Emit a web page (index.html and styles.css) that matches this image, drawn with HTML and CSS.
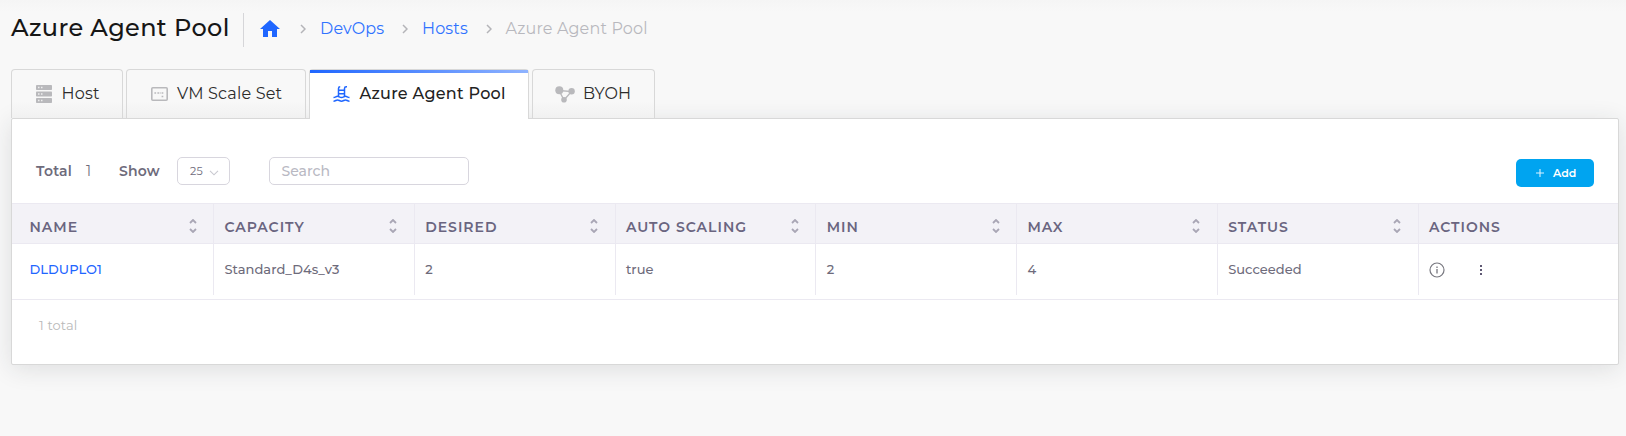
FILE: index.html
```html
<!DOCTYPE html>
<html lang="en">
<head>
<meta charset="utf-8">
<title>Azure Agent Pool</title>
<link rel="stylesheet" href="styles.css">
</head>
<body>
<svg width="0" height="0" class="defs">
  <symbol id="chev" viewBox="0 0 6 10"><path d="M1 1l4 4-4 4" fill="none" stroke="currentColor" stroke-width="1.5"/></symbol>
  <symbol id="sort" viewBox="0 0 8 14"><path d="M1 4l3-3 3 3M1 10l3 3 3-3" fill="none" stroke="currentColor" stroke-width="1.8"/></symbol>
</svg>
<header class="top">
  <h1 class="title">Azure Agent Pool</h1>
  <nav class="crumbs">
    <svg class="home" viewBox="0 0 20 17"><path d="M10 0L0 9h3v8h5v-6h4v6h5V9h3z" fill="#1f66ff"/></svg>
    <svg class="chev"><use href="#chev"/></svg>
    <a class="c-devops">DevOps</a>
    <svg class="chev"><use href="#chev"/></svg>
    <a class="c-hosts">Hosts</a>
    <svg class="chev"><use href="#chev"/></svg>
    <span class="c-current">Azure Agent Pool</span>
  </nav>
</header>
<div class="tabs">
  <div class="tab t-host">
    <svg width="16" height="18" viewBox="0 0 16 18"><g fill="#b9b9bc"><rect width="16" height="5" rx=".8"/><rect y="6.5" width="16" height="5" rx=".8"/><rect y="13" width="16" height="5" rx=".8"/></g><path d="M2 2.5h1.5M5 2.5h1.5M2 9h1.5M5 9h1.5M2 15.5h1.5M5 15.5h1.5" stroke="#eee" stroke-width="1.4"/></svg>
    <span>Host</span>
  </div>
  <div class="tab t-vm">
    <svg width="17" height="14" viewBox="0 0 17 14"><rect x=".8" y=".8" width="15.4" height="12.4" rx="1" fill="none" stroke="#b9b9bc" stroke-width="1.6"/><path d="M3.4 6h1.700M6.400 6h1.700M8.800 6h.800M10.600 6h1.700M10.600 9.500h1.700" stroke="#b9b9bc" stroke-width="1.600"/></svg>
    <span>VM Scale Set</span>
  </div>
  <div class="tab t-pool active">
    <svg width="17" height="16" viewBox="0 0 17 16" fill="none" stroke="#1f66ff" stroke-width="1.5"><path d="M5.500 10V2.400Q5.500.800 7.200.800M11.500 10V2.400Q11.500.800 13.200.800H14M5.500 4.200h6M5.500 7.800h6"/><path d="M.5 11.500C2.500 11.500 3 10.200 4.500 10.200S6.700 11.500 8.500 11.500S11 10.200 12.500 10.200S14.500 11.500 16.500 11.500M.5 15.200C2.500 15.200 3 13.900 4.500 13.900S6.700 15.200 8.500 15.200S11 13.900 12.500 13.900S14.500 15.200 16.500 15.200"/></svg>
    <span>Azure Agent Pool</span>
  </div>
  <div class="tab t-byoh">
    <svg width="20" height="17" viewBox="0 0 20 17"><path d="M4 4.500L16.500 5.500L9 14z" fill="none" stroke="#b9b9bc" stroke-width="1.3"/><g fill="#b9b9bc"><circle cx="4.300" cy="4.300" r="4"/><circle cx="16.600" cy="5.300" r="3.200"/><circle cx="9" cy="13.700" r="2.800"/></g></svg>
    <span>BYOH</span>
  </div>
</div>
<main class="panel">
  <div class="tools">
    <b class="l-total">Total</b><span class="count">1</span><b class="l-show">Show</b>
    <div class="select"><span>25</span><svg width="10" height="6" viewBox="0 0 10 6"><path d="M1 .8l4 4 4-4" fill="none" stroke="#c9c9d0" stroke-width="1.100"/></svg></div>
    <div class="search">Search</div>
    <div class="add"><svg width="8" height="8" viewBox="0 0 8 8"><path d="M4 0v8M0 4h8" stroke="#d9f1ff" stroke-width="1.100"/></svg><span>Add</span></div>
  </div>
  <div class="row head">
    <div class="cell"><span>NAME</span><svg class="sort"><use href="#sort"/></svg></div>
    <div class="cell"><span>CAPACITY</span><svg class="sort"><use href="#sort"/></svg></div>
    <div class="cell"><span>DESIRED</span><svg class="sort"><use href="#sort"/></svg></div>
    <div class="cell"><span>AUTO SCALING</span><svg class="sort"><use href="#sort"/></svg></div>
    <div class="cell"><span>MIN</span><svg class="sort"><use href="#sort"/></svg></div>
    <div class="cell"><span>MAX</span><svg class="sort"><use href="#sort"/></svg></div>
    <div class="cell"><span>STATUS</span><svg class="sort"><use href="#sort"/></svg></div>
    <div class="cell"><span>ACTIONS</span></div>
  </div>
  <div class="row body">
    <div class="cell"><a>DLDUPLO1</a></div>
    <div class="cell"><span>Standard_D4s_v3</span></div>
    <div class="cell"><span>2</span></div>
    <div class="cell"><span>true</span></div>
    <div class="cell"><span>2</span></div>
    <div class="cell"><span>4</span></div>
    <div class="cell"><span>Succeeded</span></div>
    <div class="cell acts">
      <svg width="16" height="16" viewBox="0 0 16 16"><circle cx="8" cy="8" r="7" fill="none" stroke="#77777f" stroke-width="1.200"/><path d="M8 7v4.500M8 4.500v1.400" stroke="#77777f" stroke-width="1.300"/></svg>
      <svg width="4" height="12" viewBox="0 0 4 12"><path d="M1 1h2v2H1zM1 5h2v2H1zM1 9h2v2H1z" fill="#5e5873"/></svg>
    </div>
  </div>
  <div class="foot">1 total</div>
</main>
</body>
</html>
```
FILE: styles.css
```css
* { box-sizing: border-box; }
body { margin: 0; height: 436px; overflow: hidden; background: linear-gradient(#f5f5f5, #f8f8f8 12px); font-family: Montserrat, Inter, sans-serif; color: #6e6b7b; font-size: 13px; letter-spacing: .140px; white-space: nowrap; }
svg { flex: none; display: block; }
.defs { position: absolute; }
.top { display: flex; align-items: center; height: 69px; padding: 0 0 9px 11px; }
.title { margin: 0; width: 233px; height: 34px; line-height: 30px; border-right: 1px solid #d6d6d9; font-size: 24px; font-weight: 500; letter-spacing: .380px; color: #161616; }
.crumbs { display: flex; align-items: center; padding: 0 0 4px 16px; font-size: 16px; letter-spacing: .160px; color: #b8b8be; }
.crumbs a { color: #3073ff; }
.home { width: 20px; height: 17px; margin: 0 20px 0 0; }
.chev { width: 6px; height: 10px; margin: 2px 14px 0 0; color: #b4b4b8; }
.c-devops { width: 82px; }
.c-hosts { width: 63.500px; }
.tabs { display: flex; gap: 3px; padding-left: 11px; height: 49px; }
.tab { display: flex; align-items: center; height: 49px; padding-left: 24px; border: 1px solid #d8d8d8; border-bottom: 0; border-radius: 4px 4px 0 0; background: linear-gradient(#f8f8f8 65%, #f1f1f1); color: #2c2c2c; font-size: 16px; letter-spacing: .200px; }
.tab span { margin-top: -2px; }
.t-host { width: 112px; }
.t-host span { margin-left: 9.500px; }
.t-vm { width: 180px; }
.t-vm span { margin-left: 9px; }
.t-pool { width: 220px; padding-left: 23px; }
.t-pool svg { margin-top: -2px; }
.t-pool span { margin-left: 9.500px; letter-spacing: .280px; }
.t-byoh { width: 123px; padding-left: 22px; }
.t-byoh span { margin-left: 8px; }
.tab.active { position: relative; height: 50px; background: #fff; font-weight: 500; color: #222; }
.tab.active::before { content: ""; position: absolute; left: 0; right: 0; top: 0; height: 3px; background: linear-gradient(90deg, #1f66ff, #8fb3ff); }
.panel { width: 1608px; height: 247px; margin-left: 11px; border: 1px solid #d8d8d8; border-radius: 2px; background: #fff; box-shadow: 0 4px 24px rgba(34, 41, 47, .120); }
.tools { display: flex; align-items: center; height: 84px; padding: 20px 0 0 24px; font-size: 14px; }
.tools b { font-weight: 600; color: #6e6b7b; }
.l-total { width: 50px; letter-spacing: .250px; }
.count { width: 33px; }
.l-show { width: 58px; letter-spacing: .150px; }
.select { display: flex; align-items: center; justify-content: space-between; width: 53px; height: 28px; padding: 0 10px 0 12px; border: 1px solid #d8d6de; border-radius: 5px; font-size: 11px; }
.select svg { margin-top: 3px; }
.search { width: 200px; height: 28px; line-height: 26px; margin-left: 39px; padding-left: 11.500px; border: 1px solid #d8d6de; border-radius: 5px; color: #b9b9c3; font-weight: 500; letter-spacing: 0; }
.add { display: flex; align-items: center; width: 78px; height: 28px; margin: 4px 24px 0 auto; padding-left: 20px; gap: 9px; border-radius: 5px; background: #00a4f0; color: #fff; font-size: 11px; font-weight: 600; letter-spacing: 0; }
.row { display: grid; grid-template-columns: 202px repeat(7, 200.750px); border-bottom: 1px solid #ebe9f1; }
.cell { display: flex; align-items: center; padding-left: 10.400px; }
.cell:first-child { padding-left: 17.500px; }
.cell:not(:last-child) { border-right: 1px solid #ebe9f1; }
.head { height: 41px; border-top: 1px solid #ebe9f1; background: #f3f2f7; }
.head .cell { justify-content: space-between; padding-right: 16.500px; padding-top: 6px; font-size: 14px; font-weight: 600; letter-spacing: 1px; color: #6a6580; }
.sort { width: 8px; height: 14px; margin-top: -2px; color: #a9a6b5; }
.body { height: 56px; padding-bottom: 4px; font-weight: 500; letter-spacing: .050px; }
.body span, .body a { margin-top: -2px; }
.body a { color: #1f66ff; }
.acts { gap: 34px; }
.foot { padding: 17px 0 0 27px; color: #b9b9b9; }
```
